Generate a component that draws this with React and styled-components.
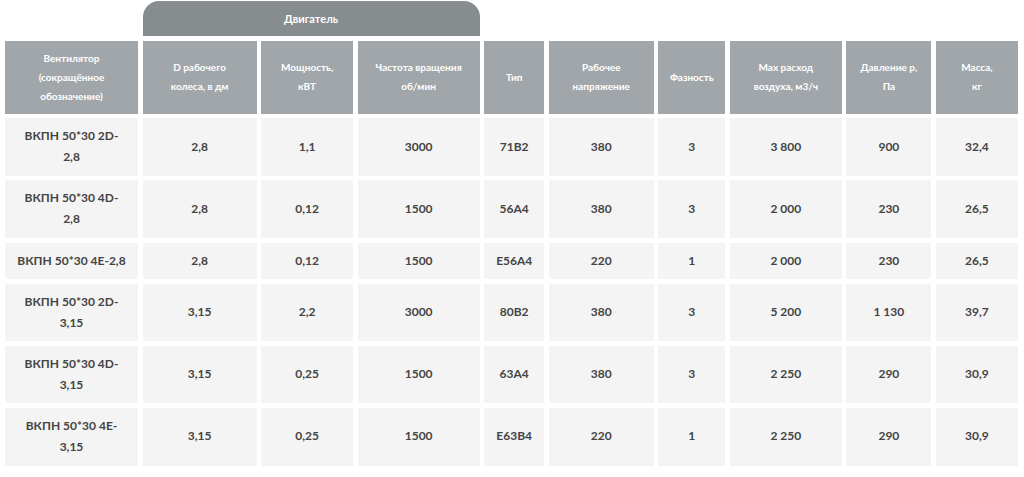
import React from "react";
import styled, { createGlobalStyle } from "styled-components";

const Global = createGlobalStyle`
  html, body { margin: 0; padding: 0; background: #ffffff; }
  body { font-family: Lato, "Open Sans", "Liberation Sans", sans-serif; }
`;

const Wrap = styled.div`
  padding: 1px 0 0 5px;
  width: 1013px;
`;

const Grid = styled.div`
  display: grid;
  grid-template-columns: 133px 114px 92px 122px 60px 105px 67px 112px 85px 82px;
  column-gap: 4.56px;
  row-gap: 4.7px;
`;

const Spacer = styled.div`
  grid-column: ${(p) => p.$span || "auto"};
`;

const Band = styled.div`
  grid-column: 2 / span 3;
  height: 35px;
  background: #878c8f;
  border-radius: 16px 16px 0 0;
  color: #ffffff;
  font-weight: 700;
  font-size: 11px;
  display: flex;
  align-items: center;
  justify-content: center;
`;

const HeadCell = styled.div`
  background: #a1a6aa;
  color: #ffffff;
  font-weight: 700;
  font-size: 10px;
  line-height: 19px;
  padding: 8px 6px;
  min-height: 57px;
  display: flex;
  align-items: center;
  justify-content: center;
  text-align: center;
`;

const Cell = styled.div`
  background: #f4f4f4;
  color: #444444;
  font-weight: 700;
  font-size: 12px;
  line-height: 20.7px;
  padding: 8px 6px;
  display: flex;
  align-items: center;
  justify-content: center;
  text-align: center;
`;

const headers = [
  ["Вентилятор", "(сокращённое", "обозначение)"],
  ["D рабочего", "колеса, в дм"],
  ["Мощность,", "кВТ"],
  ["Частота вращения", "об/мин"],
  ["Тип"],
  ["Рабочее", "напряжение"],
  ["Фазность"],
  ["Max расход", "воздуха, м3/ч"],
  ["Давление р,", "Па"],
  ["Масса,", "кг"],
];

const rows = [
  [["ВКПН 50*30 2D-", "2,8"], "2,8", "1,1", "3000", "71В2", "380", "3", "3 800", "900", "32,4"],
  [["ВКПН 50*30 4D-", "2,8"], "2,8", "0,12", "1500", "56А4", "380", "3", "2 000", "230", "26,5"],
  [["ВКПН 50*30 4Е-2,8"], "2,8", "0,12", "1500", "Е56А4", "220", "1", "2 000", "230", "26,5"],
  [["ВКПН 50*30 2D-", "3,15"], "3,15", "2,2", "3000", "80В2", "380", "3", "5 200", "1 130", "39,7"],
  [["ВКПН 50*30 4D-", "3,15"], "3,15", "0,25", "1500", "63А4", "380", "3", "2 250", "290", "30,9"],
  [["ВКПН 50*30 4Е-", "3,15"], "3,15", "0,25", "1500", "Е63В4", "220", "1", "2 250", "290", "30,9"],
];

const Lines = ({ lines }) => (
  <span>
    {lines.map((l, i) => (
      <React.Fragment key={i}>
        {i > 0 && <br />}
        {l}
      </React.Fragment>
    ))}
  </span>
);

export default function App() {
  return (
    <>
      <Global />
      <Wrap>
        <Grid>
          <Spacer />
          <Band>Двигатель</Band>
          <Spacer $span="5 / span 6" />
          {headers.map((h, i) => (
            <HeadCell key={i}>
              <Lines lines={h} />
            </HeadCell>
          ))}
          {rows.map((r, ri) =>
            r.map((c, ci) => (
              <Cell key={`${ri}-${ci}`}>
                {Array.isArray(c) ? <Lines lines={c} /> : c}
              </Cell>
            ))
          )}
        </Grid>
      </Wrap>
    </>
  );
}
